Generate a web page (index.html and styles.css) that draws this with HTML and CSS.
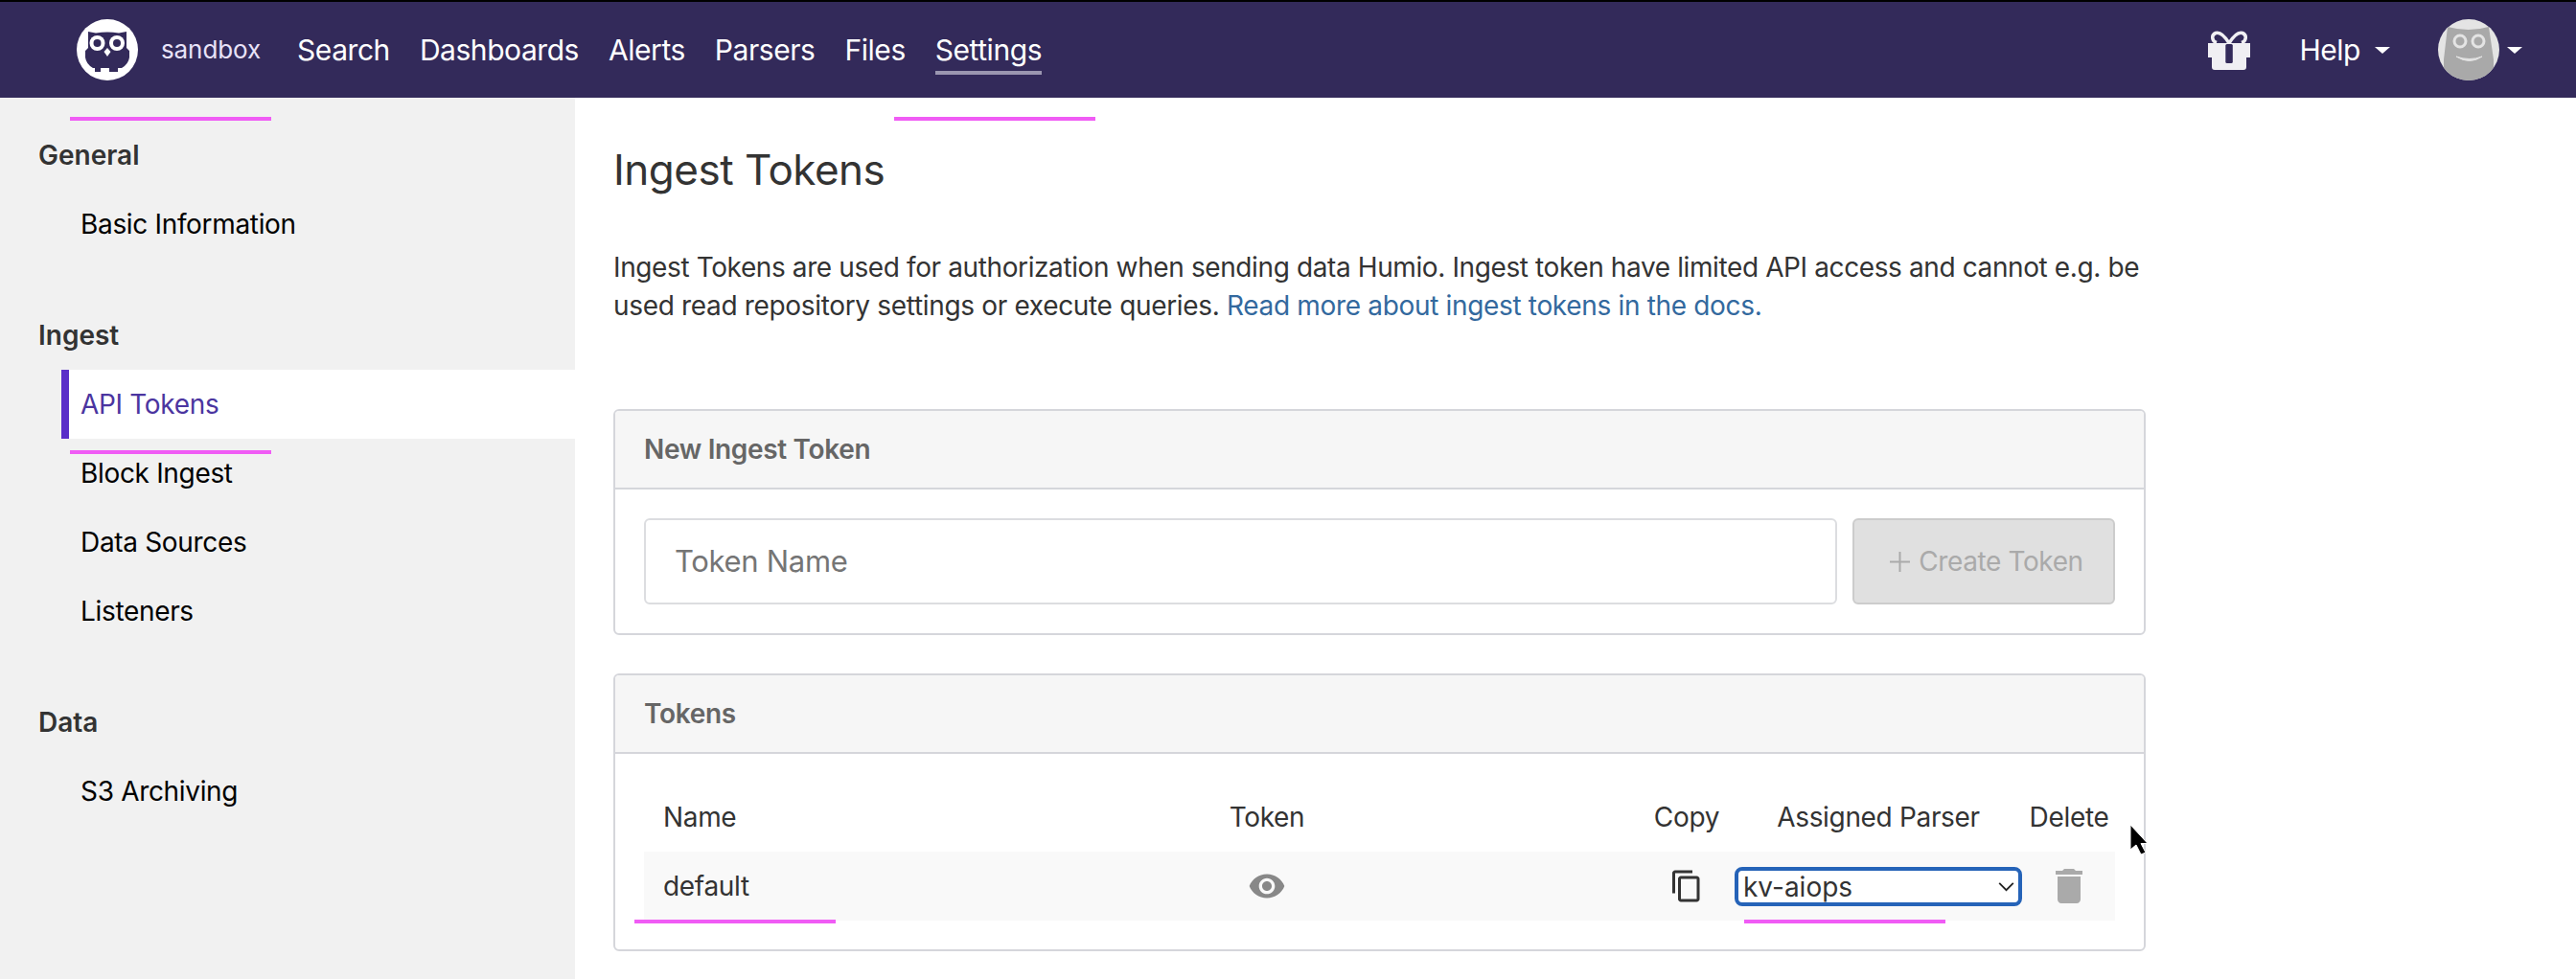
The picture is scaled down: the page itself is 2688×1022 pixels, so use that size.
FILE: index.html
```html
<!DOCTYPE html>
<html lang="en">
<head>
  <meta charset="UTF-8">
  <title>Ingest Tokens</title>
  <link rel="stylesheet" href="styles.css">
</head>
<body>

  <header class="topbar">
    <svg class="logo" viewBox="0 0 64 64">
      <circle cx="32" cy="32" r="32" fill="#fff"/>
      <path d="M12 13l8 1.500q12-2 24 0l8-1.500v17l3 3v7q-1 7-8 11h-4v4h-9v-4h-9v4h-6v-4h-2q-7-4-8-11v-7l3-3z" fill="#332a5a"/>
      <circle cx="21.500" cy="25" r="8" fill="#fff"/>
      <circle cx="42" cy="25" r="8" fill="#fff"/>
      <circle cx="21.500" cy="25" r="4" fill="#332a5a"/>
      <circle cx="42" cy="25" r="4" fill="#332a5a"/>
      <path d="M32 30l3.500 4-3.500 5-3.500-5z" fill="#fff"/>
    </svg>
    <span class="repo-name">sandbox</span>
    <nav class="main-nav">
      <a href="#">Search</a>
      <a href="#">Dashboards</a>
      <a href="#">Alerts</a>
      <a href="#">Parsers</a>
      <a href="#">Files</a>
      <a href="#" class="current">Settings</a>
    </nav>
    <div class="topbar-right">
      <svg class="gift" viewBox="0 0 44 41">
        <path d="M22 13C17 5 12 1 8 2.500 3 4.500 4 11 9 12.500M22 13C27 5 32 1 36 2.500 41 4.500 40 11 35 12.500" fill="none" stroke="#f0eff3" stroke-width="3.500"/>
        <path d="M0 13h44v15h-4v10q0 3-3 3H7q-3 0-3-3V28H0z" fill="#f0eff3"/>
        <rect x="18.300" y="14" width="7.500" height="20" rx="1.500" fill="#332a5a"/>
      </svg>
      <a href="#" class="help">Help<span class="caret"></span></a>
      <svg class="avatar" viewBox="0 0 64 64">
        <clipPath id="avatar-clip"><circle cx="32" cy="32" r="32"/></clipPath>
        <circle cx="32" cy="32" r="32" fill="#e4e4e4"/>
        <path d="M10 8q22 6 43 0l5 34v22H6V42z" fill="#a9a9a9" clip-path="url(#avatar-clip)"/>
        <circle cx="23" cy="23" r="6" fill="none" stroke="#e4e4e4" stroke-width="3"/>
        <circle cx="42" cy="23" r="6" fill="none" stroke="#e4e4e4" stroke-width="3"/>
        <path d="M19 39q14 5 27 0q-13 9-27 0z" fill="#e4e4e4" stroke="#e4e4e4"/>
      </svg>
      <span class="caret"></span>
    </div>
  </header>

  <div class="layout">
    <aside class="sidebar">
      <section class="side-group">
        <h4>General</h4>
        <a href="#">Basic Information</a>
      </section>
      <section class="side-group">
        <h4>Ingest</h4>
        <a href="#" class="active">API Tokens</a>
        <a href="#">Block Ingest</a>
        <a href="#">Data Sources</a>
        <a href="#">Listeners</a>
      </section>
      <section class="side-group">
        <h4>Data</h4>
        <a href="#">S3 Archiving</a>
      </section>
    </aside>

    <main class="content">
      <h1>Ingest Tokens</h1>
      <p class="intro">Ingest Tokens are used for authorization when sending data Humio. Ingest token have limited API access and cannot e.g. be<br>used read repository settings or execute queries. <a href="#">Read more about ingest tokens in the docs.</a></p>

      <div class="card">
        <div class="card-head">New Ingest Token</div>
        <div class="card-body new-token">
          <input type="text" placeholder="Token Name">
          <button disabled>
            <svg class="icon-plus" viewBox="0 0 21 21"><path d="M10.500 0v21M0 10.500h21" stroke="#aaa" stroke-width="2"/></svg>
            Create Token
          </button>
        </div>
      </div>

      <div class="card">
        <div class="card-head">Tokens</div>
        <div class="card-body">
          <div class="token-row">
            <div class="col-name">Name</div>
            <div class="col-mid">Token</div>
            <div class="col-mid col-copy">Copy</div>
            <div class="col-mid">Assigned Parser</div>
            <div class="col-mid">Delete</div>
          </div>
          <div class="token-row striped">
            <div class="col-name">default</div>
            <div class="col-mid">
              <svg class="icon-eye" viewBox="0 0 24 24"><path d="M12 4.500C7 4.500 2.730 7.610 1 12c1.730 4.390 6 7.500 11 7.500s9.270-3.110 11-7.500c-1.730-4.390-6-7.500-11-7.500zM12 17c-2.760 0-5-2.240-5-5s2.240-5 5-5 5 2.240 5 5-2.240 5-5 5zm0-8c-1.660 0-3 1.340-3 3s1.340 3 3 3 3-1.340 3-3-1.340-3-3-3z"/></svg>
            </div>
            <div class="col-mid col-copy">
              <svg class="icon-copy" viewBox="0 0 24 24"><path d="M16 1H4c-1.100 0-2 .9-2 2v14h2V3h12V1zm3 4H8c-1.100 0-2 .9-2 2v14c0 1.100.9 2 2 2h11c1.100 0 2-.9 2-2V7c0-1.100-.9-2-2-2zm0 16H8V7h11v14z"/></svg>
            </div>
            <div class="col-mid">
              <div class="parser-select">
                <select><option>kv-aiops</option></select>
                <svg class="chevron" viewBox="0 0 14 8"><path d="M1 1l6 6 6-6" fill="none" stroke="#222" stroke-width="1.500"/></svg>
              </div>
            </div>
            <div class="col-mid">
              <svg class="icon-trash" viewBox="0 0 24 24"><path d="M6 19c0 1.100.9 2 2 2h8c1.100 0 2-.9 2-2V7H6v12zM19 4h-3.500l-1-1h-5l-1 1H5v2h14V4z"/></svg>
            </div>
          </div>
        </div>
      </div>
    </main>
  </div>

  <!-- marks drawn over the shot -->
  <i class="mark mark-a"></i>
  <i class="mark mark-b"></i>
  <i class="mark mark-c"></i>
  <i class="mark mark-d"></i>
  <i class="mark mark-e"></i>

  <svg class="pointer" viewBox="0 0 20 32">
    <path d="M1 1v26l6-5 5 10 5-2-5-9.500h7z" fill="#000" stroke="#fff" stroke-width="1"/>
  </svg>

</body>
</html>
```

FILE: styles.css
```css
* {
  box-sizing: border-box;
}
body {
  margin: 0;
  height: 100vh;
  overflow: hidden;
  position: relative;
  font-family: Inter, "Noto Sans", sans-serif;
  font-size: 28px;
  line-height: 40px;
  letter-spacing: -0.33px;
  color: #333;
  background-color: #fff;
}
a {
  color: inherit;
  text-decoration: none;
}

/* top bar */
.topbar {
  height: 102px;
  display: flex;
  align-items: center;
  padding: 0 56px 0 80px;
  background-color: #332a5a;
  border-top: 2px solid #000;
  color: #fff;
}
.logo {
  width: 64px;
  height: 64px;
}
.repo-name {
  margin-left: 24px;
  margin-right: 38px;
  font-size: 26px;
  letter-spacing: -0.1px;
  color: #e8e2f8;
}
.main-nav {
  display: flex;
  gap: 31px;
  font-size: 30px;
  letter-spacing: -0.45px;
}
.main-nav a {
  padding: 6px 0 2px;
  border-bottom: 4px solid transparent;
}
.main-nav a.current {
  border-bottom-color: #9b96b0;
}
.topbar-right {
  margin-left: auto;
  display: flex;
  align-items: center;
}
.gift {
  width: 44px;
  height: 41px;
  margin-right: 51px;
}
.help {
  font-size: 30px;
  letter-spacing: -0.45px;
  margin-right: 50px;
  display: flex;
  align-items: center;
}
.caret {
  width: 0;
  height: 0;
  margin-left: 15px;
  border-left: 8px solid transparent;
  border-right: 8px solid transparent;
  border-top: 7px solid #fff;
}
.avatar {
  width: 64px;
  height: 64px;
}
.topbar-right > .caret {
  margin-left: 8px;
}

/* main area */
.layout {
  display: flex;
  height: 920px;
}
.sidebar {
  width: 600px;
  flex-shrink: 0;
  padding-top: 24px;
  background-color: #f1f1f1;
}
.side-group {
  margin-bottom: 44px;
}
.side-group h4 {
  margin: 0;
  height: 72px;
  line-height: 72px;
  padding-left: 40px;
  font-size: 28px;
  font-weight: 600;
  letter-spacing: 0;
  color: #333;
}
.side-group a {
  display: block;
  height: 72px;
  line-height: 72px;
  margin-left: 64px;
  padding-left: 20px;
  color: #000;
}
.side-group a.active {
  padding-left: 12px;
  border-left: 8px solid #5a2fc8;
  background-color: #fff;
  color: #4b35a0;
}

.content {
  width: 1639px;
  padding: 46px 0 0 40px;
}
h1 {
  margin: 0;
  font-size: 44px;
  line-height: 58px;
  font-weight: 400;
  letter-spacing: -0.5px;
}
.intro {
  margin: 53px 0 0;
  white-space: nowrap;
  color: #333;
}
.intro::first-line {
  letter-spacing: -0.39px;
}
.intro a {
  color: #33699e;
}

.card {
  margin-top: 40px;
  border: 2px solid #d5d6db;
  border-radius: 6px;
  overflow: hidden;
}
.intro + .card {
  margin-top: 88px;
}
.card-head {
  height: 82px;
  line-height: 80px;
  padding-left: 30px;
  font-weight: 600;
  color: #666;
  background-color: #f6f6f6;
  border-bottom: 2px solid #d5d6db;
}
.card-body {
  padding: 30px;
}
.new-token {
  display: flex;
  gap: 16px;
}
.new-token input {
  flex: 1;
  height: 90px;
  padding: 0 30px 2px;
  border: 2px solid #dcdde0;
  border-radius: 6px;
  font-family: inherit;
  font-size: 31px;
  letter-spacing: -0.3px;
}
.new-token input::placeholder {
  color: #757575;
}
.new-token button {
  width: 274px;
  height: 90px;
  padding: 0 0 0 6px;
  display: flex;
  align-items: center;
  justify-content: center;
  gap: 9px;
  border: 2px solid #ccc;
  border-radius: 6px;
  background-color: #e0e0e0;
  color: #aaa;
  font-family: inherit;
  font-size: 28px;
  letter-spacing: -0.4px;
}
.icon-plus {
  width: 21px;
  height: 21px;
}

/* tokens table */
.token-row {
  height: 72px;
  display: grid;
  grid-template-columns: 358px 584px 96px 100px 300px 98px;
  align-items: center;
}
.striped {
  background-color: #f9f9f9;
}
.col-name {
  padding-left: 20px;
}
.col-mid {
  display: flex;
  justify-content: center;
  align-items: center;
}
.col-copy {
  grid-column: 4;
}
.icon-eye {
  width: 40px;
  height: 40px;
  fill: #888;
}
.icon-copy {
  width: 36px;
  height: 36px;
  fill: #333;
}
.icon-trash {
  width: 48px;
  height: 48px;
  fill: #aaa;
}
.parser-select {
  position: relative;
  width: 300px;
}
.parser-select select {
  display: block;
  width: 100%;
  height: 41px;
  padding: 0 0 0 5px;
  border: 4px solid #2563b8;
  border-radius: 8px;
  background-color: #fff;
  color: #333;
  font-family: inherit;
  font-size: 28px;
  letter-spacing: 0;
  appearance: none;
  outline: none;
}
.chevron {
  position: absolute;
  right: 8px;
  top: 15px;
  width: 17px;
  height: 11px;
}

/* pink marks and mouse pointer sit on top of the page */
.mark {
  position: absolute;
  width: 210px;
  height: 4px;
  background-color: #f05cf5;
}
.mark-a { left: 73px; top: 122px; }
.mark-b { left: 933px; top: 122px; }
.mark-c { left: 73px; top: 470px; }
.mark-d { left: 662px; top: 960px; }
.mark-e { left: 1820px; top: 960px; }
.pointer {
  position: absolute;
  left: 2222px;
  top: 860px;
  width: 20px;
  height: 32px;
}
```
